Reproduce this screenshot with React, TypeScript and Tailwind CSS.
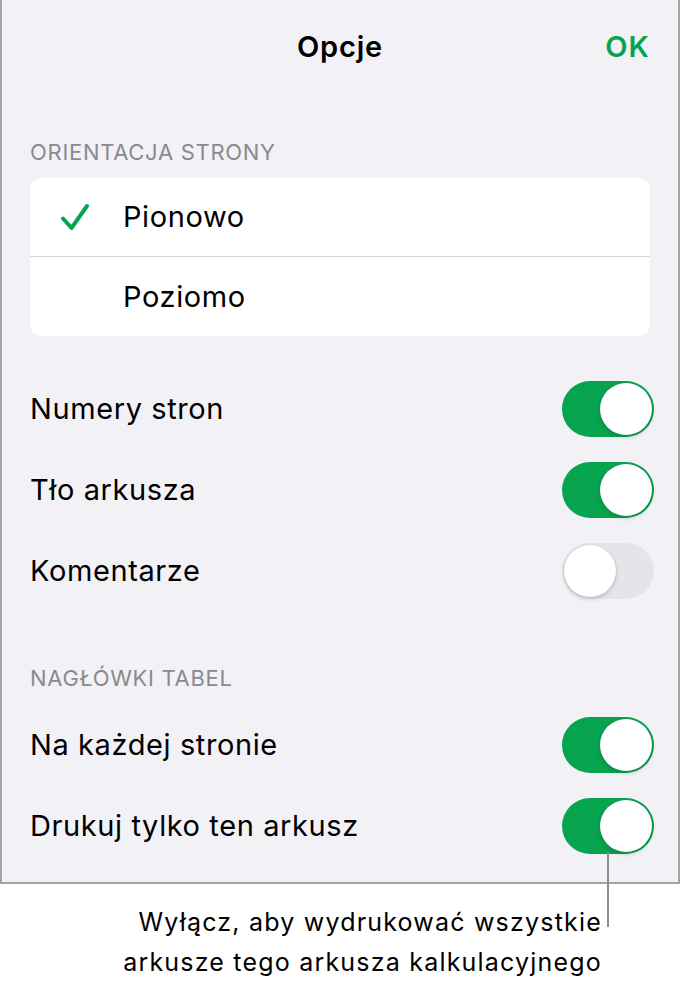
import { useState } from 'react';

const GREEN = 'bg-[#06a44f]';

function Toggle({ on, onChange }: { on: boolean; onChange: () => void }) {
  return (
    <button
      onClick={onChange}
      className={`relative w-[92px] h-[56px] shrink-0 rounded-full transition-colors ${on ? GREEN : 'bg-[#e4e4e9]'}`}
    >
      <span
        className={`absolute top-[2px] w-[52px] h-[52px] rounded-full bg-white shadow-[0_2px_4px_rgba(0,0,0,0.18),0_0_1px_rgba(0,0,0,0.15)] transition-all ${on ? 'left-[38px]' : 'left-[2px]'}`}
      />
    </button>
  );
}

function SectionLabel({ children }: { children: string }) {
  return <div className="px-[28px] text-[22px] leading-[28px] tracking-[0.7px] text-[#8a8a8e]">{children}</div>;
}

function SwitchRow({ label, on, onChange }: { label: string; on: boolean; onChange: () => void }) {
  return (
    <div className="h-[81px] pl-[28px] pr-[24px] flex items-center justify-between">
      <span className="text-[29px] tracking-[0.6px] text-black">{label}</span>
      <Toggle on={on} onChange={onChange} />
    </div>
  );
}

export default function App() {
  const [orientation, setOrientation] = useState<'portrait' | 'landscape'>('portrait');
  const [opts, setOpts] = useState({
    pageNumbers: true,
    background: true,
    comments: false,
    everyPage: true,
    thisSheetOnly: true,
  });
  const flip = (k: keyof typeof opts) => setOpts((o) => ({ ...o, [k]: !o[k] }));

  return (
    <div className="relative w-[681px] h-[982px] bg-white font-['Inter',sans-serif]">
      <div className="w-[680px] h-[884px] bg-[#f2f1f6] border-l-2 border-r-2 border-b-2 border-[#a3a3a3]">
        <div className="h-[94px] grid grid-cols-3 items-center px-[28px]">
          <span />
          <span className="text-center text-[29px] tracking-[0.8px] font-semibold text-black">Opcje</span>
          <span className="text-right text-[29px] tracking-[1px] font-semibold text-[#06a44f]">OK</span>
        </div>

        <div className="pt-[44px]">
          <SectionLabel>ORIENTACJA STRONY</SectionLabel>
        </div>

        <div className="mx-[28px] mt-[12px] bg-white rounded-[12px] overflow-hidden">
          {[
            { id: 'portrait' as const, label: 'Pionowo' },
            { id: 'landscape' as const, label: 'Poziomo' },
          ].map((o, i) => (
            <button
              key={o.id}
              onClick={() => setOrientation(o.id)}
              className={`w-full h-[79px] flex items-center text-left ${i === 0 ? 'border-b border-[#d4d4d8]' : ''}`}
            >
              <span className="w-[93px] shrink-0 pl-[30px]">
                {orientation === o.id && (
                  <svg width="30" height="28" viewBox="0 0 30 28" fill="none" className="block">
                    <path d="M3 15.5 L11.5 25 L27 3" stroke="#06a44f" strokeWidth="4" strokeLinecap="round" strokeLinejoin="round" />
                  </svg>
                )}
              </span>
              <span className="text-[29px] tracking-[0.6px] text-black">{o.label}</span>
            </button>
          ))}
        </div>

        <div className="mt-[32px]">
          <SwitchRow label="Numery stron" on={opts.pageNumbers} onChange={() => flip('pageNumbers')} />
          <SwitchRow label="Tło arkusza" on={opts.background} onChange={() => flip('background')} />
          <SwitchRow label="Komentarze" on={opts.comments} onChange={() => flip('comments')} />
        </div>

        <div className="mt-[53px]">
          <SectionLabel>NAGŁÓWKI TABEL</SectionLabel>
        </div>

        <div className="mt-[12px]">
          <SwitchRow label="Na każdej stronie" on={opts.everyPage} onChange={() => flip('everyPage')} />
          <SwitchRow label="Drukuj tylko ten arkusz" on={opts.thisSheetOnly} onChange={() => flip('thisSheetOnly')} />
        </div>
      </div>

      {/* callout line from the last switch down to the note */}
      <div className="absolute left-[607px] top-[852px] w-[2px] h-[75px] bg-[#8e8e8e]" />

      <div className="pt-[18px] pr-[79px] text-right text-[25px] leading-[40px] tracking-[1.2px] text-black">
        <p>Wyłącz, aby wydrukować wszystkie</p>
        <p>arkusze tego arkusza kalkulacyjnego</p>
      </div>
    </div>
  );
}
